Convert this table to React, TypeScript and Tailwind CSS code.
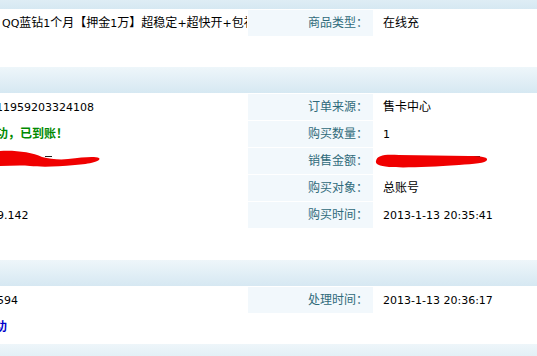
const font = "font-['DejaVu_Sans','Noto_Sans_CJK_SC',sans-serif]";

function Header({ clipTop = false }: { clipTop?: boolean }) {
  return (
    <div
      className={`h-[26px] bg-gradient-to-b from-[#eef6fa] to-[#d6e8f2] ${clipTop ? "-mt-[17px]" : ""}`}
    />
  );
}

function Num({ children }: { children: React.ReactNode }) {
  return <span className="text-[11px]">{children}</span>;
}

function Label({ children }: { children?: React.ReactNode }) {
  return (
    <div className="w-[125px] shrink-0 bg-[#f2f8fc] pr-[5px] text-right text-[#2f6a7a] leading-[26px]">
      {children}
    </div>
  );
}

type RowProps = {
  left: React.ReactNode;
  label?: string;
  value?: React.ReactNode;
  height?: string;
};

function Row({ left, label, value, height = "h-[26px]" }: RowProps) {
  return (
    <div className={`flex ${height} bg-white`}>
      <div className="relative w-[247px] shrink-0 overflow-hidden whitespace-nowrap leading-[26px] text-black">
        {left}
      </div>
      <div className="w-px shrink-0" />
      {label ? <Label>{label}</Label> : <div className="w-[125px] shrink-0" />}
      <div className="relative flex-1 overflow-hidden whitespace-nowrap pl-[10px] leading-[26px] text-black">
        {value}
      </div>
    </div>
  );
}

function LeftScribble() {
  return (
    <svg className="absolute left-0 top-0" width="110" height="26" viewBox="0 0 110 26">
      <rect x="45" y="8" width="7" height="1" fill="#222" />
      <path
        d="M0,3 C14,2 32,4 42,9 C50,11 60,12 68,11 C84,9 95,8 99,10 C102,13 90,16 75,17 C55,19 40,19 30,18 C20,17 10,18 0,18 Z"
        fill="#f00000"
      />
    </svg>
  );
}

function RightScribble() {
  return (
    <svg className="absolute left-0 top-0" width="125" height="26" viewBox="374 149 125 26">
      <rect x="474" y="157" width="7" height="1" fill="#222" />
      <path
        d="M377,162 C378,156 386,155 400,156 L470,157 C482,157 489,158 488,161 C487,164 475,165 460,166 C430,168 405,169 390,168 C380,167 376,165 377,162 Z"
        fill="#f00000"
      />
    </svg>
  );
}

export default function App() {
  return (
    <div className={`h-[356px] w-[537px] overflow-hidden bg-white text-[12px] ${font}`}>
      <Header clipTop />
      <div className="h-px" />
      <Row
        left={
          <span className="ml-[2px]">
            <Num>QQ</Num>蓝钻<Num>1</Num>个月【押金<Num>1</Num>万】超稳定<Num>+</Num>超快开<Num>+</Num>包补
          </span>
        }
        label="商品类型："
        value="在线充"
      />
      <div className="h-[31px]" />

      <Header />
      <div className="flex flex-col gap-px pt-px">
        <Row
          left={<span className="-ml-[4px] text-[11px]">11959203324108</span>}
          label="订单来源："
          value="售卡中心"
        />
        <Row
          left={<span className="-ml-[4px] font-bold text-[#008a00]">功，已到账！</span>}
          label="购买数量："
          value={<Num>1</Num>}
        />
        <Row left={<LeftScribble />} label="销售金额：" value={<RightScribble />} />
        <Row left={null} label="购买对象：" value="总账号" />
        <Row
          left={<span className="-ml-[3px] text-[11px]">9.142</span>}
          label="购买时间："
          value={<Num>2013-1-13 20:35:41</Num>}
        />
      </div>
      <div className="h-[32px]" />

      <Header />
      <div className="flex flex-col gap-px pt-px">
        <Row
          left={<span className="-ml-[3px] text-[11px]">594</span>}
          label="处理时间："
          value={<Num>2013-1-13 20:36:17</Num>}
        />
        <Row
          left={<span className="-ml-[5px] font-bold text-[#0000cc]">功</span>}
          height="h-[28px]"
        />
      </div>
      <div className="h-[2px]" />
      <Header />
    </div>
  );
}
